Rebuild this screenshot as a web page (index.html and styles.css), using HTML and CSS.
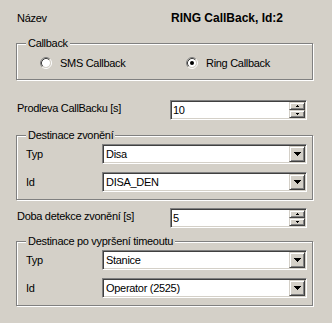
FILE: index.html
```html
<!DOCTYPE html>
<html>
<head>
<meta charset="utf-8">
<title>RING CallBack</title>
<link rel="stylesheet" href="styles.css">
</head>
<body>
<div class="dlg">
  <div class="title-row">
    <span class="title-lbl">Název</span>
    <span class="title-val">RING CallBack, Id:2</span>
  </div>

  <div class="group g-callback">
    <span class="legend">Callback</span>
    <div class="radios">
      <label class="radio">
        <svg class="rb" viewBox="0 0 12 12" width="12" height="12"><circle cx="6" cy="6" r="4" fill="#fff"/><path d="M2.11 9.89A5.5 5.5 0 0 1 9.89 2.11" fill="none" stroke="#808080"/><path d="M9.89 2.11A5.5 5.5 0 0 1 2.11 9.89" fill="none" stroke="#fff"/><path d="M2.82 9.18A4.5 4.5 0 0 1 9.18 2.82" fill="none" stroke="#404040"/><path d="M9.18 2.82A4.5 4.5 0 0 1 2.82 9.18" fill="none" stroke="#d4d0c8"/></svg>
        <span>SMS Callback</span>
      </label>
      <label class="radio">
        <svg class="rb" viewBox="0 0 12 12" width="12" height="12"><circle cx="6" cy="6" r="4" fill="#fff"/><path d="M2.11 9.89A5.5 5.5 0 0 1 9.89 2.11" fill="none" stroke="#808080"/><path d="M9.89 2.11A5.5 5.5 0 0 1 2.11 9.89" fill="none" stroke="#fff"/><path d="M2.82 9.18A4.5 4.5 0 0 1 9.18 2.82" fill="none" stroke="#404040"/><path d="M9.18 2.82A4.5 4.5 0 0 1 2.82 9.18" fill="none" stroke="#d4d0c8"/><circle cx="6" cy="6" r="2" fill="#000"/></svg>
        <span>Ring Callback</span>
      </label>
    </div>
  </div>

  <div class="field-row r-first">
    <span class="flabel">Prodleva CallBacku [s]</span>
    <div class="spin">
      <span class="val">10</span>
      <div class="spin-btns">
        <span class="sbtn"><svg width="3" height="2" shape-rendering="crispEdges"><path d="M1 0h1v1H1zM0 1h3v1H0z"/></svg></span>
        <span class="sbtn"><svg width="3" height="2" shape-rendering="crispEdges"><path d="M0 0h3v1H0zM1 1h1v1H1z"/></svg></span>
      </div>
    </div>
  </div>

  <div class="group g-dest">
    <span class="legend">Destinace zvonění</span>
    <div class="grow">
      <span class="glabel">Typ</span>
      <div class="combo"><span class="val">Disa</span><span class="ddbtn"><svg width="7" height="4" shape-rendering="crispEdges"><path d="M0 0h7v1H0zM1 1h5v1H1zM2 2h3v1H2zM3 3h1v1H3z"/></svg></span></div>
    </div>
    <div class="grow">
      <span class="glabel">Id</span>
      <div class="combo"><span class="val">DISA_DEN</span><span class="ddbtn"><svg width="7" height="4" shape-rendering="crispEdges"><path d="M0 0h7v1H0zM1 1h5v1H1zM2 2h3v1H2zM3 3h1v1H3z"/></svg></span></div>
    </div>
  </div>

  <div class="field-row r-second">
    <span class="flabel">Doba detekce zvonění [s]</span>
    <div class="spin">
      <span class="val">5</span>
      <div class="spin-btns">
        <span class="sbtn"><svg width="3" height="2" shape-rendering="crispEdges"><path d="M1 0h1v1H1zM0 1h3v1H0z"/></svg></span>
        <span class="sbtn"><svg width="3" height="2" shape-rendering="crispEdges"><path d="M0 0h3v1H0zM1 1h1v1H1z"/></svg></span>
      </div>
    </div>
  </div>

  <div class="group g-timeout">
    <span class="legend">Destinace po vypršení timeoutu</span>
    <div class="grow">
      <span class="glabel">Typ</span>
      <div class="combo"><span class="val">Stanice</span><span class="ddbtn"><svg width="7" height="4" shape-rendering="crispEdges"><path d="M0 0h7v1H0zM1 1h5v1H1zM2 2h3v1H2zM3 3h1v1H3z"/></svg></span></div>
    </div>
    <div class="grow">
      <span class="glabel">Id</span>
      <div class="combo"><span class="val">Operator (2525)</span><span class="ddbtn"><svg width="7" height="4" shape-rendering="crispEdges"><path d="M0 0h7v1H0zM1 1h5v1H1zM2 2h3v1H2zM3 3h1v1H3z"/></svg></span></div>
    </div>
  </div>
</div>
</body>
</html>
```
FILE: styles.css
```css
html, body {
  margin: 0;
  padding: 0;
}
body {
  background: #d4d0c8;
  font-family: "Liberation Sans", Arial, sans-serif;
  font-size: 11px;
  letter-spacing: -0.3px;
  color: #000;
  width: 332px;
  height: 323px;
  overflow: hidden;
}
* { box-sizing: border-box; }

.dlg {
  padding: 10px 0 0 16px;
}

.title-row {
  display: flex;
  height: 16px;
  line-height: 16px;
  padding-left: 1px;
}
.title-lbl { width: 154px; flex: none; }
.title-val { font-weight: bold; font-size: 12px; letter-spacing: 0; white-space: nowrap; }

.group {
  width: 297px;
  border: 1px solid #808080;
  box-shadow: 1px 1px 0 #fff, inset 1px 1px 0 #fff;
  display: flex;
  flex-direction: column;
}
.legend {
  align-self: flex-start;
  margin: -7px 0 0 9px;
  padding: 0 2px;
  height: 13px;
  line-height: 13px;
  background: #d4d0c8;
  white-space: nowrap;
}

.g-callback { margin-top: 17px; padding-bottom: 10px; }
.radios {
  display: flex;
  margin-top: 7px;
  padding-left: 23px;
  height: 12px;
}
.radio {
  flex: none;
  display: flex;
  align-items: center;
  width: 146px;
  height: 12px;
  line-height: 12px;
  white-space: nowrap;
}
.rb { flex: none; margin-right: 8px; display: block; }

.field-row {
  display: flex;
  align-items: flex-start;
  padding-left: 1px;
}
.r-first { margin-top: 20px; }
.r-second { margin-top: 8px; }
.flabel { width: 153px; flex: none; line-height: 16px; white-space: nowrap; }

.spin, .combo {
  flex: none;
  height: 20px;
  border: 1px solid;
  border-color: #808080 #fff #fff #808080;
  box-shadow: inset 1px 1px 0 #404040, inset -1px -1px 0 #d4d0c8;
  padding: 1px;
  background: #fff;
  display: flex;
}
.spin { width: 137px; }
.combo { width: 205px; }
.val { flex: 1; line-height: 16px; white-space: nowrap; }
.spin .val { padding-left: 1px; }
.combo .val { padding-left: 2px; }

.spin-btns {
  width: 16px;
  display: flex;
  flex-direction: column;
}
.sbtn, .ddbtn {
  flex: none;
  border: 1px solid;
  border-color: #d4d0c8 #404040 #404040 #d4d0c8;
  box-shadow: inset 1px 1px 0 #fff, inset -1px -1px 0 #808080;
  background: #d4d0c8;
  display: flex;
  align-items: center;
  justify-content: center;
}
.sbtn { height: 8px; }
.sbtn svg, .ddbtn svg { display: block; }
.ddbtn { width: 16px; height: 16px; padding-bottom: 1px; }

.g-dest { margin-top: 15px; padding-bottom: 7px; }
.g-timeout { margin-top: 13px; padding-bottom: 7px; }
.grow {
  display: flex;
  padding-left: 9px;
  height: 20px;
  margin-top: 8px;
}
.legend + .grow { margin-top: 2px; }
.glabel { width: 76px; flex: none; line-height: 20px; }
```
